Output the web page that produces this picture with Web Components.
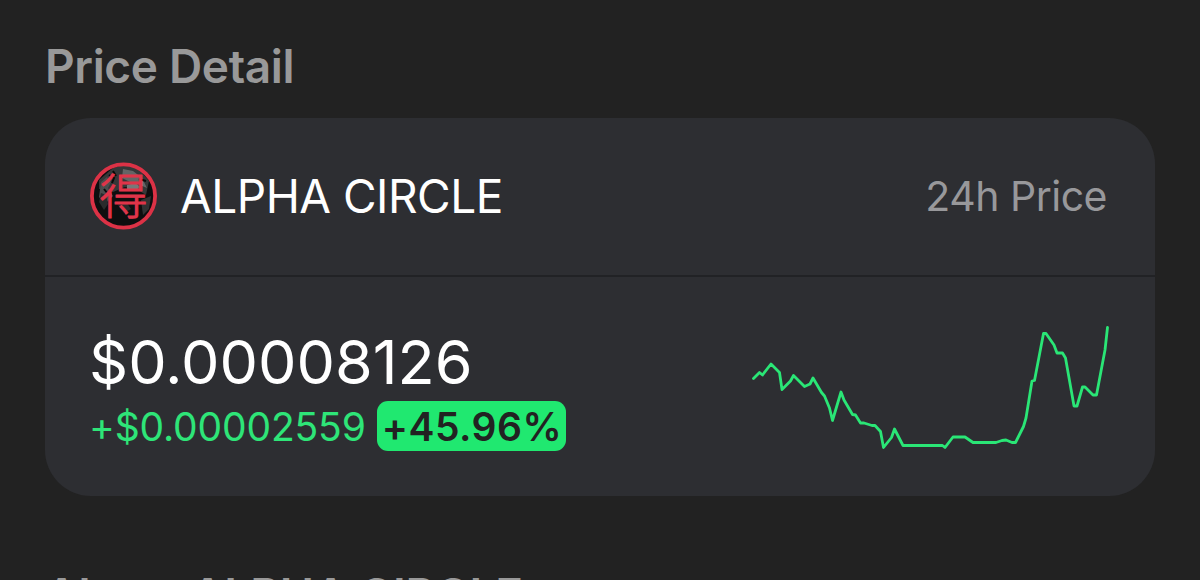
<!DOCTYPE html>
<html lang="en">
<head>
<meta charset="utf-8">
<title>Price Detail</title>
<style>
  body {
    margin: 0;
    height: 580px;
    overflow: hidden;
    background-color: #222222;
    font-family: Inter, "Liberation Sans", sans-serif;
  }
</style>
</head>
<body>
<price-page>
  <section-title>Price Detail</section-title>
  <price-card>
    <token-logo slot="logo"></token-logo>
    <span slot="name">ALPHA CIRCLE</span>
    <span slot="period">24h Price</span>
    <span slot="price">$0.00008126</span>
    <span slot="change">+$0.00002559</span>
    <percent-badge slot="change-percent">+45.96%</percent-badge>
    <spark-line slot="chart" points="753.5,378.5 759.5,372.5 762.5,375 771,364 779.5,372.5 782,389.5 790.5,381 793.5,375.5 804.5,386.5 810,384 813,378 821.5,392.5 824.5,396 829.5,408 832.5,420.5 841,392 844,400 852.5,414.5 855.5,415 860.5,423 864,423 872,425.5 875,425.5 880.5,431.5 883.5,447.5 891.5,437.5 894.5,429 903,445.5 942.5,445.5 945,447.5 953,437 965,437 973,442.5 996,442.5 1002,440.5 1006,440 1012,442.5 1015.5,442.5 1023.5,426.5 1026,418 1032,381 1034.5,380.5 1043.5,333.5 1046,333.5 1054,345 1057,353 1062.5,353 1065.5,358 1074,406 1077,406 1082.5,387 1085,387 1093,395 1096.5,395 1105,350 1107.5,327.5"></spark-line>
  </price-card>
  <section-title>About ALPHA CIRCLE</section-title>
</price-page>

<script>
class PricePage extends HTMLElement {
    constructor() {
        super();
        this.attachShadow({mode: "open"});
    }

    connectedCallback() {
        this.shadowRoot.innerHTML = `
        <style>
        :host {
            display: flex;
            flex-direction: column;
            gap: 22px;
            box-sizing: border-box;
            padding: 36px 45px 0;
        }
        </style>
        <slot></slot>
        `;
    }
}
customElements.define("price-page", PricePage);

class SectionTitle extends HTMLElement {
    constructor() {
        super();
        this.attachShadow({mode: "open"});
    }

    connectedCallback() {
        this.shadowRoot.innerHTML = `
        <style>
        :host {
            display: block;
            height: 60px;
            line-height: 60px;
            font-size: 46px;
            font-weight: 600;
            letter-spacing: -0.35px;
            color: #999999;
            white-space: nowrap;
        }
        :host(:last-child) {
            margin-top: 47px;
            letter-spacing: -0.05px;
        }
        </style>
        <slot></slot>
        `;
    }
}
customElements.define("section-title", SectionTitle);

class TokenLogo extends HTMLElement {
    constructor() {
        super();
        this.attachShadow({mode: "open"});
    }

    connectedCallback() {
        this.shadowRoot.innerHTML = `
        <style>
        :host {
            display: block;
            width: 68px;
            height: 68px;
        }
        svg {
            display: block;
        }
        text {
            font-family: "Noto Sans CJK JP", sans-serif;
            font-size: 48px;
            font-weight: 300;
        }
        </style>
        <svg width="68" height="68" viewBox="0 0 68 68">
            <defs><clipPath id="disc"><circle cx="34.5" cy="34" r="32"/></clipPath></defs>
            <g clip-path="url(#disc)">
                <rect width="68" height="68" fill="#0d0e0f"/>
                <path d="M10 18L24 6l14-4 12 5 10 12-3 14-8-5-13-3-12 5-14-3z" fill="#353738"/>
                <path d="M34 7l10 2 9 7 5 10-7-3-10-3-8-4z" fill="#646566"/>
                <path d="M12 20l6-5 4 5-3 6 5 8-8 8-6-7z" fill="#4b4d4e"/>
                <path d="M38 23l8-2 6 4-5 3-9 1z" fill="#77797a"/>
                <path d="M12 31l5 2 2 9-4 6-5-8zM29 43l9-2 4 6-7 4z" fill="#292b2c"/>
                <path d="M52 38l10-4-2 13-6 6z" fill="#303233"/>
                <path d="M20 13l5 3-2 5M50 17l7 2M15 27l4 5M24 9l3 5" stroke="#08090a" stroke-width="2" fill="none"/>
            </g>
            <circle cx="34.5" cy="34" r="31.6" fill="none" stroke="#dc3246" stroke-width="3.8"/>
            <text x="34.5" y="52" text-anchor="middle" fill="#e03449" stroke="#e03449" stroke-width="1" stroke-linejoin="round">得</text>
        </svg>
        `;
    }
}
customElements.define("token-logo", TokenLogo);

class PercentBadge extends HTMLElement {
    constructor() {
        super();
        this.attachShadow({mode: "open"});
    }

    connectedCallback() {
        this.shadowRoot.innerHTML = `
        <style>
        :host {
            display: block;
            box-sizing: border-box;
            width: 189px;
            height: 50px;
            padding-left: 1px;
            line-height: 52px;
            border-radius: 11px;
            background-color: #20e870;
            color: #222222;
            font-size: 39px;
            font-weight: 600;
            letter-spacing: 0.5px;
            text-align: center;
            white-space: nowrap;
        }
        </style>
        <slot></slot>
        `;
    }
}
customElements.define("percent-badge", PercentBadge);

class SparkLine extends HTMLElement {
    constructor() {
        super();
        this.attachShadow({mode: "open"});
    }

    connectedCallback() {
        this.shadowRoot.innerHTML = `
        <style>
        :host {
            display: block;
            width: 360px;
            height: 128px;
        }
        svg {
            display: block;
        }
        </style>
        <svg width="360" height="128" viewBox="750 323 360 128">
            <polyline points="${this.getAttribute("points")}" fill="none" stroke="#2ae676" stroke-width="2.8" stroke-linecap="round" stroke-linejoin="round"/>
        </svg>
        `;
    }
}
customElements.define("spark-line", SparkLine);

class PriceCard extends HTMLElement {
    constructor() {
        super();
        this.attachShadow({mode: "open"});
    }

    connectedCallback() {
        this.shadowRoot.innerHTML = `
        <style>
        :host {
            display: block;
            height: 378px;
            border-radius: 46px;
            background-color: #2d2e32;
            color: #ffffff;
            white-space: nowrap;
        }
        header {
            display: flex;
            align-items: center;
            box-sizing: border-box;
            height: 159px;
            padding: 0 48px 2px 44px;
            border-bottom: 2px solid #212225;
        }
        .name {
            margin-left: 23px;
            font-size: 46px;
            line-height: 60px;
            letter-spacing: -0.5px;
        }
        .period {
            margin-left: auto;
            font-size: 41px;
            line-height: 60px;
            letter-spacing: -0.5px;
            color: #98989b;
        }
        .body {
            display: flex;
            justify-content: space-between;
            padding: 46px 45px 0 44px;
        }
        .price {
            height: 78px;
            line-height: 78px;
            font-size: 61px;
        }
        .row {
            display: flex;
            align-items: center;
            gap: 12px;
        }
        .change {
            width: 276px;
            height: 50px;
            font-size: 39px;
            line-height: 52px;
            letter-spacing: -0.15px;
            color: #2ee578;
        }
        </style>
        <header>
            <slot name="logo"></slot>
            <div class="name"><slot name="name"></slot></div>
            <div class="period"><slot name="period"></slot></div>
        </header>
        <div class="body">
            <div>
                <div class="price"><slot name="price"></slot></div>
                <div class="row">
                    <div class="change"><slot name="change"></slot></div>
                    <slot name="change-percent"></slot>
                </div>
            </div>
            <slot name="chart"></slot>
        </div>
        `;
    }
}
customElements.define("price-card", PriceCard);
</script>
</body>
</html>
